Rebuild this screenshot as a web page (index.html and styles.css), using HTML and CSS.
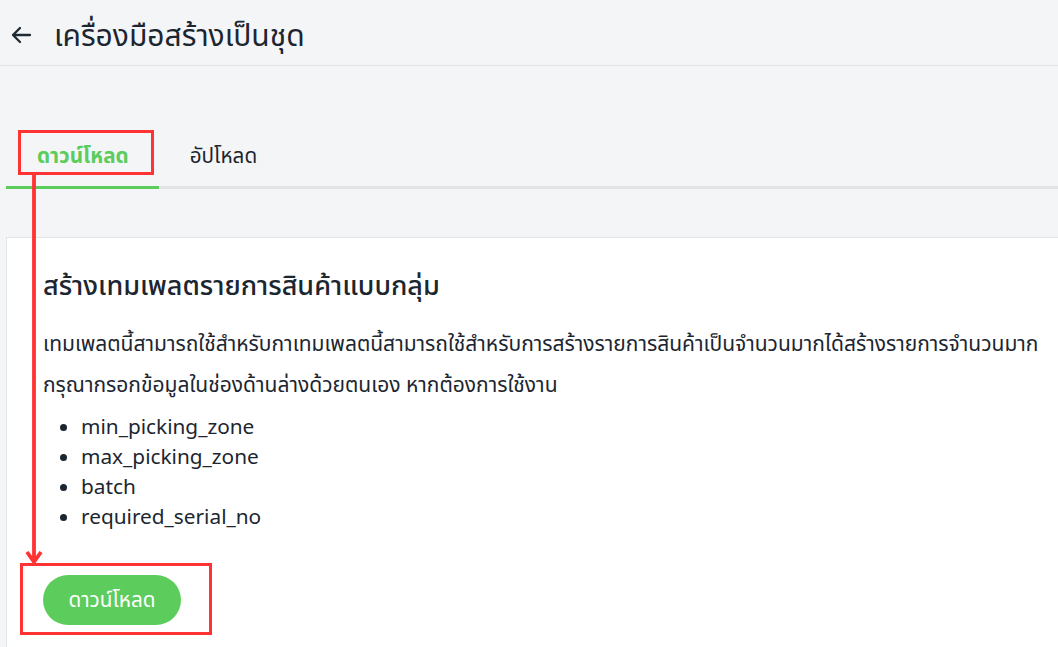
FILE: index.html
```html
<!DOCTYPE html>
<html lang="th">
<head>
<meta charset="utf-8">
<link rel="stylesheet" href="styles.css">
</head>
<body>
<div class="page">
  <header class="topbar">
    <svg class="back" width="24" height="24" viewBox="0 0 24 24"><path d="M21 12H4M11 5l-7 7 7 7" fill="none" stroke="#1f2a33" stroke-width="2.3" stroke-linecap="round" stroke-linejoin="round"/></svg>
    <h1 class="title">เครื่องมือสร้างเป็นชุด</h1>
  </header>
  <nav class="tabs">
    <div class="tab active">ดาวน์โหลด</div>
    <div class="tab">อัปโหลด</div>
  </nav>
  <section class="card">
    <h2 class="card-title">สร้างเทมเพลตรายการสินค้าแบบกลุ่ม</h2>
    <p class="desc">เทมเพลตนี้สามารถใช้สำหรับกาเทมเพลตนี้สามารถใช้สำหรับการสร้างรายการสินค้าเป็นจำนวนมากได้สร้างรายการจำนวนมาก</p>
    <p class="desc">กรุณากรอกข้อมูลในช่องด้านล่างด้วยตนเอง หากต้องการใช้งาน</p>
    <ul class="fields">
      <li>min_picking_zone</li>
      <li>max_picking_zone</li>
      <li>batch</li>
      <li>required_serial_no</li>
    </ul>
    <button class="btn">ดาวน์โหลด</button>
  </section>
  <div class="mark mark-tab"></div>
  <div class="mark mark-btn"></div>
  <svg class="arrow" width="20" height="392" viewBox="0 0 20 392"><path d="M10 0V388M3 378l7 10 7-10" fill="none" stroke="#ff3333" stroke-width="3.8" stroke-linejoin="round"/></svg>
</div>
</body>
</html>
```
FILE: styles.css
```css
* { box-sizing: border-box; }
html, body { margin: 0; padding: 0; }
body {
  background: #f4f5f7;
  font-family: "Noto Sans", "Noto Sans Thai", "DejaVu Sans", sans-serif;
  color: #1c2630;
  overflow: hidden;
}
.page { position: relative; width: 1058px; height: 647px; }
.topbar {
  height: 66px;
  display: flex;
  align-items: center;
  gap: 21px;
  padding: 4px 0 0 9px;
  border-bottom: 1px solid #e2e3e5;
}
.title { margin: 0; font-size: 30px; font-weight: 400; line-height: 40px; color: #1c2630; }
.tabs {
  margin-top: 60px;
  margin-left: 6px;
  display: flex;
  border-bottom: 3px solid #e3e4e6;
  height: 63px;
}
.tab {
  padding: 0 30px 0 31px;
  font-size: 20.7px;
  display: flex;
  align-items: center;
  color: #1c2630;
  margin-bottom: -3px;
  border-bottom: 3px solid transparent;
}
.tab.active {
  color: #5ccc5c;
  font-weight: 700;
  border-bottom-color: #5ccc5c;
}
.card {
  margin: 48px 0 0 6px;
  background: #fff;
  border: 1px solid #e3e4e6;
  border-right: none;
  padding: 29px 0 0 36px;
  height: 420px;
}
.card-title { margin: 0 0 20px; font-size: 27px; line-height: 36px; font-weight: 500; color: #1c2630; }
.desc { margin: 0; font-size: 21px; line-height: 41px; }
.fields { margin: 6px 0 0; padding-left: 38px; font-size: 20.8px; line-height: 30px; }
.btn {
  display: block;
  margin-top: 44px;
  width: 138px;
  height: 50px;
  border: none;
  border-radius: 25px;
  background: #5ccc5c;
  color: #fff;
  font-family: inherit;
  font-size: 20.7px;
  padding: 0;
}
.mark { position: absolute; border: 3.5px solid #ff3333; }
.mark-tab { left: 18px; top: 130px; width: 136px; height: 45px; }
.mark-btn { left: 20px; top: 563px; width: 192px; height: 72px; }
.arrow { position: absolute; left: 24px; top: 174px; }
```
